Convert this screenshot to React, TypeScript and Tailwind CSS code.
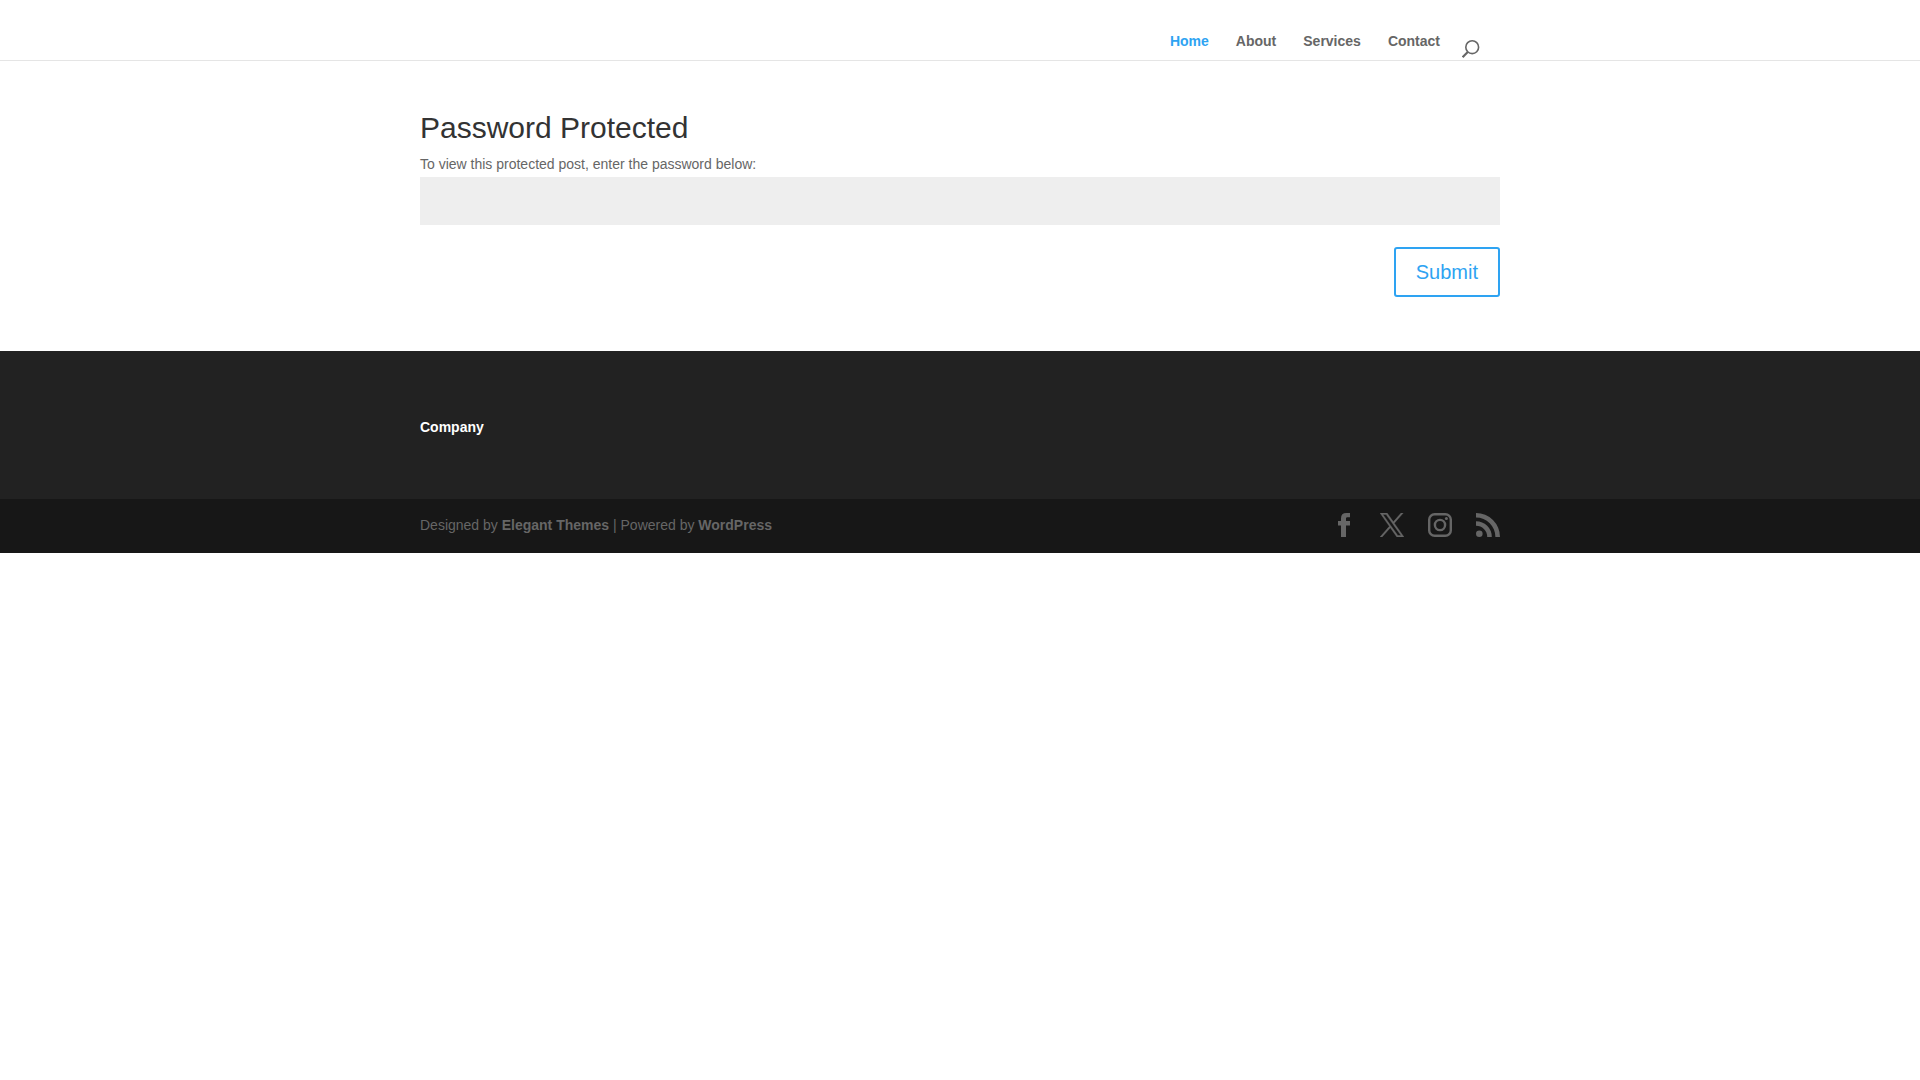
const navItems = ["Home", "About", "Services", "Contact"];

function SearchIcon() {
  return (
    <svg viewBox="0 0 18 18" className="size-[18px]" fill="none" stroke="currentColor">
      <circle cx="10.2" cy="7.2" r="6.4" strokeWidth="1.6" />
      <path d="M6 11.700 L0.600 17.100" strokeWidth="2.200" />
    </svg>
  );
}

function FacebookIcon() {
  return (
    <svg viewBox="0 0 24 24" className="size-6" fill="currentColor">
      <path d="M9 24V12.500H6V8h3V5.500C9 1.800 10.800 0 14.400 0H18v4.200h-2.300C14.300 4.200 14 4.700 14 5.700V8h4v4.500H14V24z" />
    </svg>
  );
}

function XIcon() {
  return (
    <svg viewBox="0 0 24 24" className="size-6" fill="currentColor" stroke="currentColor" strokeWidth="0.4">
      <path d="M14.280 10.160 23.220 0h-2.120l-7.760 8.820L7.150 0H0l9.370 13.340L0 24h2.120l8.190-9.320L16.850 24H24zM11.380 13.460l-.95-1.330L2.880 1.560h3.260l6.090 8.520.95 1.330 7.920 11.090h-3.260z" />
    </svg>
  );
}

function InstagramIcon() {
  return (
    <svg viewBox="0 0 24 24" className="size-6" fill="none" stroke="currentColor" strokeWidth="2.400">
      <rect x="1.200" y="1.200" width="21.600" height="21.600" rx="5.400" />
      <circle cx="12" cy="12" r="5.100" />
      <circle cx="18.400" cy="5.600" r="1.500" fill="currentColor" stroke="none" />
    </svg>
  );
}

function RssIcon() {
  return (
    <svg viewBox="0 0 24 24" className="size-6" fill="currentColor">
      <circle cx="3.300" cy="20.700" r="3.300" />
      <path d="M0 8.200v4.600A11.200 11.200 0 0 1 11.200 24h4.600A15.800 15.800 0 0 0 0 8.200z" />
      <path d="M0 0v4.600A19.400 19.400 0 0 1 19.400 24H24A24 24 0 0 0 0 0z" />
    </svg>
  );
}

const socials = [
  { label: "Facebook", Icon: FacebookIcon },
  { label: "X", Icon: XIcon },
  { label: "Instagram", Icon: InstagramIcon },
  { label: "RSS", Icon: RssIcon },
];

export default function App() {
  return (
    <div className="bg-white font-['Liberation_Sans',Arial,sans-serif] text-sm leading-6 text-[#666666]">
      <header className="border-b border-[#e5e5e5]">
        <div className="mx-auto flex h-[60px] w-4/5 max-w-[1080px] items-start justify-end pr-5">
          <nav className="flex gap-[27px] pt-[29px] font-bold">
            {navItems.map((item) => (
              <a key={item} href="#" className={item === "Home" ? "text-[#2ea3f2]" : ""}>
                {item}
              </a>
            ))}
          </nav>
          <button type="button" aria-label="Search" className="mt-10 ml-[22px]">
            <SearchIcon />
          </button>
        </div>
      </header>

      <main className="mx-auto w-4/5 max-w-[1080px] pt-[52px] pb-[54px]">
        <h1 className="pb-2.5 text-[30px] leading-[30px] text-[#333333]">Password Protected</h1>
        <form onSubmit={(e) => e.preventDefault()}>
          <label htmlFor="password" className="block pb-0.5 leading-[22px]">
            To view this protected post, enter the password below:
          </label>
          <input
            id="password"
            type="password"
            className="block h-12 w-full bg-[#eeeeee] px-4 outline-none"
          />
          <div className="mt-[22px] flex justify-end">
            <button
              type="submit"
              className="h-[50px] rounded-[3px] border-2 border-[#2ea3f2] px-5 text-xl text-[#2ea3f2]"
            >
              Submit
            </button>
          </div>
        </form>
      </main>

      <footer className="bg-[#222222]">
        <div className="mx-auto w-4/5 max-w-[1080px] pt-16 pb-[60px]">
          <a href="#" className="block font-bold text-white">
            Company
          </a>
        </div>
        <div className="bg-[#171717]">
          <div className="mx-auto flex w-4/5 max-w-[1080px] items-start justify-between pt-3.5 pb-4">
            <p>
              Designed by{" "}
              <a href="#" className="font-bold">
                Elegant Themes
              </a>{" "}
              | Powered by{" "}
              <a href="#" className="font-bold">
                WordPress
              </a>
            </p>
            <ul className="flex gap-6">
              {socials.map(({ label, Icon }) => (
                <li key={label}>
                  <a href="#" aria-label={label} className="block">
                    <Icon />
                  </a>
                </li>
              ))}
            </ul>
          </div>
        </div>
      </footer>
    </div>
  );
}
